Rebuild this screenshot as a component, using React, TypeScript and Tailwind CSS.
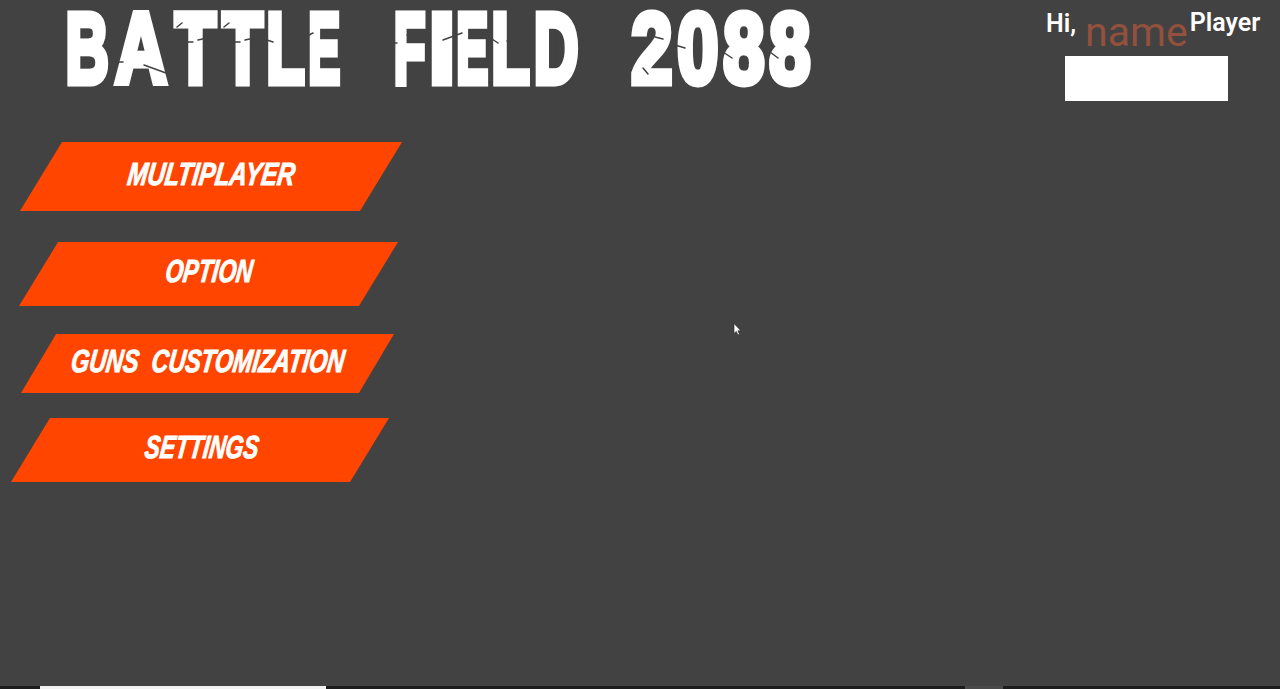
const titleLetters = [
  { ch: "B", cls: "w-[41px] ml-[67px]", glyph: "scale-x-[0.6]" },
  { ch: "A", cls: "w-[56px] ml-[5px]", glyph: "scale-x-[0.72]" },
  { ch: "T", cls: "w-[43px] ml-[5px]", glyph: "scale-x-[0.67]" },
  { ch: "T", cls: "w-[42px] ml-[5px]", glyph: "scale-x-[0.66]" },
  { ch: "L", cls: "w-[38px] ml-[3px]", glyph: "scale-x-[0.63]" },
  { ch: "E", cls: "w-[31px] ml-[4px]", glyph: "scale-x-[0.48]" },
  { ch: "F", cls: "w-[31px] ml-[54px]", glyph: "scale-x-[0.52]" },
  { ch: "I", cls: "w-[20px] ml-[7px]", glyph: "scale-x-[0.95]" },
  { ch: "E", cls: "w-[31px] ml-[5px]", glyph: "scale-x-[0.48]" },
  { ch: "L", cls: "w-[38px] ml-[4px]", glyph: "scale-x-[0.63]" },
  { ch: "D", cls: "w-[43px] ml-[5px]", glyph: "scale-x-[0.62]" },
  { ch: "2", cls: "w-[43px] ml-[52px]", glyph: "scale-x-[0.74]" },
  { ch: "0", cls: "w-[42px] ml-[4px]", glyph: "scale-x-[0.74]" },
  { ch: "8", cls: "w-[42px] ml-[4px]", glyph: "scale-x-[0.74]" },
  { ch: "8", cls: "w-[42px] ml-[4px]", glyph: "scale-x-[0.74]" },
];

// the chips and slits in the title lettering, in page pixels
const titleCracks = [
  "M144 65l22 8", "M115 62h8", "M177 27l5-4", "M185 42h8", "M198 40l9-2",
  "M224 27l5-4", "M232 42h8", "M245 40l9-2", "M267 40l6 2", "M283 41l5 2", "M309 35l4-2",
  "M407 35l16 3", "M394 43h3", "M443 40l19-7", "M492 39l6 4", "M507 41l5 2", "M556 32v30", "M550 52h10",
  "M655 37l8 2", "M643 68l5 6", "M675 45l10 3", "M723 52l9 6", "M770 52l8 6",
];

const menuItems = [
  { label: "MULTIPLAYER", box: "ml-[20px] mt-[41px] h-[69px] w-[382px] [clip-path:polygon(11%_0,100%_0,89%_100%,0_100%)] pl-[1px] pb-[6px]", text: "scale-x-[0.75]" },
  { label: "OPTION", box: "ml-[19px] mt-[31px] h-[64px] w-[379px] [clip-path:polygon(10.3%_0,100%_0,89.7%_100%,0_100%)] pl-[2px] pb-[6px]", text: "scale-x-[0.71]" },
  { label: "GUNS  CUSTOMIZATION", box: "ml-[21px] mt-[28px] h-[59px] w-[373px] [clip-path:polygon(9.4%_0,100%_0,90.6%_100%,0_100%)] pl-[1px] pb-[5px]", text: "scale-x-[0.73]" },
  { label: "SETTINGS", box: "ml-[11px] mt-[25px] h-[64px] w-[378px] [clip-path:polygon(10.3%_0,100%_0,89.7%_100%,0_100%)] pl-[4px] pb-[6px]", text: "scale-x-[0.71]" },
];

function Cursor() {
  return (
    <svg className="absolute left-[733px] top-[323px]" width="9" height="13" viewBox="0 0 9 13">
      <path d="M1 0.5v10l2.3-2.1 1.6 3.6 1.6-.7-1.6-3.5h3z" fill="#fff" stroke="#222" strokeWidth="0.6" />
    </svg>
  );
}

export default function App() {
  return (
    <div className="relative flex h-[689px] w-[1280px] flex-col overflow-hidden bg-[#424242] font-['Roboto',sans-serif]">
      {/* Top bar */}
      <div className="flex h-[101px] items-start justify-between">
        <h1 className="mt-[-8px] flex font-['Liberation_Sans',sans-serif] text-[100px] font-bold leading-[112px] text-white [-webkit-text-stroke:7px_white]">
          {titleLetters.map((l, i) => (
            <span key={i} className={`flex justify-center ${l.cls}`}>
              <span className={l.glyph}>{l.ch}</span>
            </span>
          ))}
        </h1>
        <svg className="absolute left-0 top-0" width="820" height="100" fill="none" stroke="#424242" strokeWidth="1.5" strokeLinecap="round">
          {titleCracks.map((d) => (
            <path key={d} d={d} />
          ))}
        </svg>
        <div className="mr-[20px] flex w-[214px] flex-col">
          <div className="flex h-[56px] items-start whitespace-nowrap text-white">
            <span className="mt-[8px] text-[25px] font-semibold leading-[32px]">Hi,</span>
            <span className="ml-[9px] mt-[9px] text-[41px] leading-[46px] text-[#93503c]">name</span>
            <span className="ml-[2px] mt-[7px] text-[25px] font-semibold leading-[32px]">Player</span>
          </div>
          <div className="ml-[19px] h-[45px] w-[163px] bg-white" />
        </div>
      </div>

      {/* Menu */}
      <nav className="flex flex-col items-start">
        {menuItems.map((item) => (
          <button key={item.label} className={`flex items-center justify-center bg-[#ff4500] ${item.box}`}>
            <span className={`-skew-x-[10deg] whitespace-pre font-['Liberation_Sans',sans-serif] text-[32px] font-bold italic leading-none text-white [-webkit-text-stroke:1px_white] ${item.text}`}>
              {item.label}
            </span>
          </button>
        ))}
      </nav>

      <Cursor />

      {/* Bottom strip */}
      <div className="mt-auto flex h-[3px] bg-[#1c1c1c]">
        <div className="ml-[40px] w-[286px] bg-[#f2f2f2]" />
        <div className="ml-[639px] w-[38px] bg-[#4a4a4a]" />
      </div>
    </div>
  );
}
